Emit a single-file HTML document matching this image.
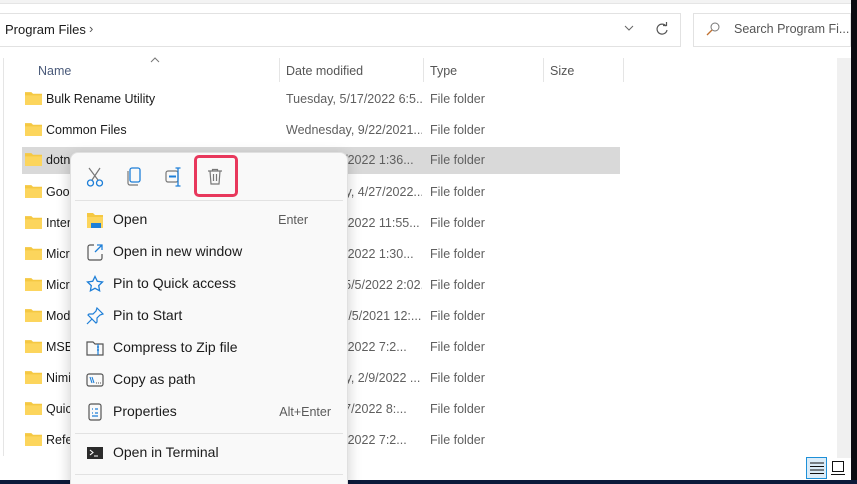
<!DOCTYPE html>
<html style="overflow:hidden;width:857px;height:484px"><head><style>
*{margin:0;padding:0;box-sizing:border-box}
body{width:857px;height:484px;overflow:hidden;background:#fff;font-family:"Segoe UI","Liberation Sans",sans-serif;font-size:12px;color:#1a1a1a;position:relative}
.abs{position:absolute}
.row{position:absolute;left:22px;width:598px;height:27px}
.row .ic{position:absolute;left:3px;top:5px;width:17px;height:14px}
.row .n{position:absolute;left:24px;top:6px;font-size:12.5px}
.row .d{position:absolute;left:264px;top:6px;color:#5f5f5f;width:136px;white-space:nowrap;overflow:hidden;font-size:12.5px}
.row .t{position:absolute;left:408px;top:6px;color:#5f5f5f;font-size:12.5px}
.menu{position:absolute;left:70px;top:152px;width:278px;height:340px;background:#f9f9f9;border:1px solid #e0e0e0;border-radius:8px;box-shadow:0 4px 14px rgba(0,0,0,.2)}
.mi{position:absolute;left:0;width:276px;height:30px;font-size:14px;color:#1b1b1b}
.mi .l{position:absolute;left:42px;top:6px}
.mi .k{position:absolute;right:16px;top:8px;font-size:12.5px;color:#5a5a5a}
.mi svg{position:absolute;left:15px;top:6px}
.sep{position:absolute;left:4px;width:268px;height:1px;background:#e2e2e2}
</style></head><body>
<div class="abs" style="left:0;top:0;width:857px;height:4px;background:#f3f3f3;border-bottom:1px solid #e5e5e5"></div>
<div class="abs" style="left:0;top:13px;width:681px;height:34px;border:1px solid #e2e2e2;border-left:none"></div>
<div class="abs" style="left:5px;top:22px;font-size:13px">Program Files</div>
<div class="abs" style="left:89px;top:21px;font-size:13px;color:#555">›</div>
<svg class="abs" style="left:624px;top:24px" width="10" height="8"><path d="M1 2l4 4 4-4" stroke="#666" fill="none"/></svg>
<svg class="abs" style="left:655px;top:22px" width="14" height="14"><path d="M11 4A5 5 0 1 0 12 8" stroke="#555" fill="none" stroke-width="1.2"/><path d="M8 3.5h3.5V0" stroke="#555" fill="none" stroke-width="1.2"/></svg>
<div class="abs" style="left:693px;top:13px;width:158px;height:34px;border:1px solid #e2e2e2"></div>
<svg class="abs" style="left:706px;top:22px" width="14" height="14"><circle cx="9" cy="5" r="4" stroke="#777" fill="none"/><path d="M6 8l-5 5" stroke="#c07030" stroke-width="1.3"/></svg>
<div class="abs" style="left:734px;top:22px;font-size:12.5px;color:#555">Search Program Fi...</div>
<div class="abs" style="left:851px;top:0;width:6px;height:484px;background:#0b0b10"></div>
<div class="abs" style="left:3px;top:58px;width:1px;height:398px;background:#e5e5e5"></div>
<div class="abs" style="left:837px;top:58px;width:14px;height:400px;background:#f0f0f0"></div>
<div class="abs" style="left:0;top:480px;width:857px;height:4px;background:#0c1a3a"></div>
<svg class="abs" style="left:150px;top:57px" width="10" height="6"><path d="M1 5l4-4 4 4" stroke="#777" fill="none"/></svg>
<div class="abs" style="left:38px;top:64px;color:#4a5a7a;font-size:12.5px">Name</div>
<div class="abs" style="left:279px;top:58px;width:1px;height:24px;background:#e5e5e5"></div>
<div class="abs" style="left:286px;top:64px;color:#555;font-size:12.5px">Date modified</div>
<div class="abs" style="left:423px;top:58px;width:1px;height:24px;background:#e5e5e5"></div>
<div class="abs" style="left:430px;top:64px;color:#555;font-size:12.5px">Type</div>
<div class="abs" style="left:543px;top:58px;width:1px;height:24px;background:#e5e5e5"></div>
<div class="abs" style="left:550px;top:64px;color:#555;font-size:12.5px">Size</div>
<div class="abs" style="left:623px;top:58px;width:1px;height:24px;background:#e5e5e5"></div>

<div class="row" style="top:86px"><svg class="ic" viewBox="0 0 16 13"><path d="M0 1h6l1.5 1.5H16V13H0z" fill="#f5c842"/><path d="M0 4h16v9H0z" fill="#fcd55c"/></svg><span class="n">Bulk Rename Utility</span><span class="d">Tuesday, 5/17/2022 6:5...</span><span class="t">File folder</span></div>
<div class="row" style="top:117px"><svg class="ic" viewBox="0 0 16 13"><path d="M0 1h6l1.5 1.5H16V13H0z" fill="#f5c842"/><path d="M0 4h16v9H0z" fill="#fcd55c"/></svg><span class="n">Common Files</span><span class="d">Wednesday, 9/22/2021...</span><span class="t">File folder</span></div>
<div class="row" style="top:147px;background:#d9d9d9"><svg class="ic" viewBox="0 0 16 13"><path d="M0 1h6l1.5 1.5H16V13H0z" fill="#f5c842"/><path d="M0 4h16v9H0z" fill="#fcd55c"/></svg><span class="n">dotnet</span><span class="d">Friday, 6/3/2022 1:36...</span><span class="t">File folder</span></div>
<div class="row" style="top:179px"><svg class="ic" viewBox="0 0 16 13"><path d="M0 1h6l1.5 1.5H16V13H0z" fill="#f5c842"/><path d="M0 4h16v9H0z" fill="#fcd55c"/></svg><span class="n">Google</span><span class="d">Wednesday, 4/27/2022...</span><span class="t">File folder</span></div>
<div class="row" style="top:210px"><svg class="ic" viewBox="0 0 16 13"><path d="M0 1h6l1.5 1.5H16V13H0z" fill="#f5c842"/><path d="M0 4h16v9H0z" fill="#fcd55c"/></svg><span class="n">Internet</span><span class="d">Friday, 5/6/2022 11:55...</span><span class="t">File folder</span></div>
<div class="row" style="top:241px"><svg class="ic" viewBox="0 0 16 13"><path d="M0 1h6l1.5 1.5H16V13H0z" fill="#f5c842"/><path d="M0 4h16v9H0z" fill="#fcd55c"/></svg><span class="n">Microsoft</span><span class="d">Friday, 6/3/2022 1:30...</span><span class="t">File folder</span></div>
<div class="row" style="top:272px"><svg class="ic" viewBox="0 0 16 13"><path d="M0 1h6l1.5 1.5H16V13H0z" fill="#f5c842"/><path d="M0 4h16v9H0z" fill="#fcd55c"/></svg><span class="n">Microsoft</span><span class="d">Thursday, 5/5/2022 2:02...</span><span class="t">File folder</span></div>
<div class="row" style="top:303px"><svg class="ic" viewBox="0 0 16 13"><path d="M0 1h6l1.5 1.5H16V13H0z" fill="#f5c842"/><path d="M0 4h16v9H0z" fill="#fcd55c"/></svg><span class="n">Modifiable</span><span class="d">Sunday, 12/5/2021 12:...</span><span class="t">File folder</span></div>
<div class="row" style="top:334px"><svg class="ic" viewBox="0 0 16 13"><path d="M0 1h6l1.5 1.5H16V13H0z" fill="#f5c842"/><path d="M0 4h16v9H0z" fill="#fcd55c"/></svg><span class="n">MSBuild</span><span class="d">Friday, 6/3/2022 7:2...</span><span class="t">File folder</span></div>
<div class="row" style="top:365px"><svg class="ic" viewBox="0 0 16 13"><path d="M0 1h6l1.5 1.5H16V13H0z" fill="#f5c842"/><path d="M0 4h16v9H0z" fill="#fcd55c"/></svg><span class="n">Nimi</span><span class="d">Wednesday, 2/9/2022 ...</span><span class="t">File folder</span></div>
<div class="row" style="top:396px"><svg class="ic" viewBox="0 0 16 13"><path d="M0 1h6l1.5 1.5H16V13H0z" fill="#f5c842"/><path d="M0 4h16v9H0z" fill="#fcd55c"/></svg><span class="n">Quick</span><span class="d">Friday, 5/27/2022 8:...</span><span class="t">File folder</span></div>
<div class="row" style="top:427px"><svg class="ic" viewBox="0 0 16 13"><path d="M0 1h6l1.5 1.5H16V13H0z" fill="#f5c842"/><path d="M0 4h16v9H0z" fill="#fcd55c"/></svg><span class="n">Reference</span><span class="d">Friday, 6/3/2022 7:2...</span><span class="t">File folder</span></div>

<div class="abs" style="left:806px;top:457px;width:21px;height:22px;border:1px solid #1e90d8;background:#dcecf8"></div>
<svg class="abs" style="left:810px;top:462px" width="14" height="12"><path d="M0 1h14M0 4.5h14M0 8h14M0 11.5h14" stroke="#111"/></svg>
<svg class="abs" style="left:831px;top:461px" width="14" height="14"><rect x="1.5" y=".5" width="11" height="10" stroke="#111" fill="none"/><path d="M0 13.5h14" stroke="#111"/></svg>

<div class="menu">
  <svg class="abs" style="left:15px;top:14px" width="18" height="20"><path d="M3 1l9 12M14 1L6 13" stroke="#777" stroke-width="1.2"/><circle cx="4.5" cy="16" r="3" stroke="#1e7fd8" fill="none" stroke-width="1.3"/><circle cx="13.5" cy="16" r="3" stroke="#1e7fd8" fill="none" stroke-width="1.3"/></svg>
  <svg class="abs" style="left:55px;top:14px" width="16" height="20"><rect x="4" y="1" width="10" height="14" rx="2" stroke="#1e7fd8" fill="none" stroke-width="1.3"/><path d="M2 4v12a2 2 0 0 0 2 2h8" stroke="#777" fill="none" stroke-width="1.2"/></svg>
  <svg class="abs" style="left:94px;top:14px" width="18" height="20"><rect x="1" y="4" width="12" height="11" rx="2" stroke="#777" fill="none" stroke-width="1.2"/><path d="M13 1v18M10.5 1h5M10.5 19h5" stroke="#1e7fd8" stroke-width="1.3"/><path d="M4 9.5h7" stroke="#1e7fd8" stroke-width="2"/></svg>
  <div class="abs" style="left:123px;top:2px;width:44px;height:42px;border:3px solid #e8385c;border-radius:5px"></div>
  <svg class="abs" style="left:136px;top:15px" width="16" height="18"><path d="M1 3h14M5.5 3V1.5h5V3M3 3l1 13h8l1-13M6.5 6v7M9.5 6v7" stroke="#777" fill="none" stroke-width="1.2"/></svg>
  <div class="sep" style="top:47px"></div>
  <div class="mi" style="top:52px"><svg width="18" height="18"><path d="M1 2h6l2 2h8v13H1z" fill="#f5c842"/><rect x="1" y="6" width="16" height="11" fill="#fcd55c"/><rect x="5" y="12" width="10" height="5" fill="#1e7fd8"/></svg><span class="l">Open</span><span class="k" style="right:39px">Enter</span></div>
  <div class="mi" style="top:84px"><svg width="18" height="18"><path d="M8 2H4a2 2 0 0 0-2 2v11a2 2 0 0 0 2 2h10a2 2 0 0 0 2-2v-4" stroke="#555" fill="none" stroke-width="1.2"/><path d="M9 9l7-7M11 2h5v5" stroke="#1e7fd8" fill="none" stroke-width="1.3"/></svg><span class="l">Open in new window</span></div>
  <div class="mi" style="top:116px"><svg width="18" height="18"><path d="M9 1.5l2.3 4.8 5.2.7-3.8 3.6.9 5.2L9 13.3l-4.6 2.5.9-5.2L1.5 7l5.2-.7z" stroke="#1e7fd8" fill="none" stroke-width="1.3"/></svg><span class="l">Pin to Quick access</span></div>
  <div class="mi" style="top:148px"><svg width="18" height="18"><path d="M11 1l6 6-3 1-3 3v4l-1 1-8-8 1-1h4l3-3z" stroke="#1e7fd8" fill="none" stroke-width="1.2"/><path d="M1 17l5-5" stroke="#1e7fd8" stroke-width="1.2"/></svg><span class="l">Pin to Start</span></div>
  <div class="mi" style="top:180px"><svg width="18" height="18"><path d="M1 3h6l2 2h8v11H1z" stroke="#555" fill="none" stroke-width="1.2"/><path d="M12 5v11M11 8h2M11 11h2" stroke="#1e7fd8" stroke-width="1.2"/></svg><span class="l">Compress to Zip file</span></div>
  <div class="mi" style="top:212px"><svg width="18" height="18"><rect x="1" y="3" width="16" height="12" rx="2" stroke="#555" fill="none" stroke-width="1.2"/><path d="M4 6l2 6M6 6l2 6" stroke="#1e7fd8" stroke-width="1.1"/><path d="M10 12h1M12 12h1M14 12h1" stroke="#555"/></svg><span class="l">Copy as path</span></div>
  <div class="mi" style="top:244px"><svg width="18" height="18"><rect x="3" y="1" width="12" height="16" rx="2" stroke="#555" fill="none" stroke-width="1.2"/><path d="M6 6h1M6 10h1M9 6h3M9 10h3M6 13h6" stroke="#1e7fd8" stroke-width="1.3"/></svg><span class="l">Properties</span><span class="k">Alt+Enter</span></div>
  <div class="sep" style="top:280px"></div>
  <div class="mi" style="top:285px"><svg width="18" height="18"><rect x="1" y="3" width="16" height="12" fill="#2b2b2b"/><path d="M4 6l3 2.5L4 11M8 12h4" stroke="#fff" fill="none" stroke-width="1.1"/></svg><span class="l">Open in Terminal</span></div>
  <div class="sep" style="top:321px"></div>
</div>
</body></html>
